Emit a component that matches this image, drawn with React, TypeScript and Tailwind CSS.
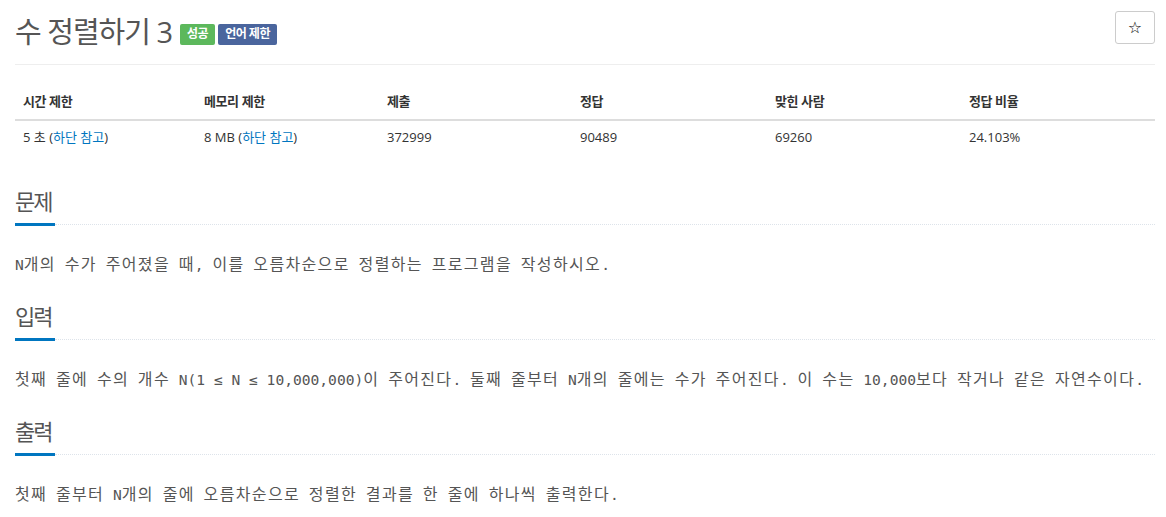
const HANGUL = /([\uAC00-\uD7A3]+)/;

// Korean runs are drawn full width, latin runs half width, like a CJK coding font
function MonoText({ text }: { text: string }) {
    const parts = text.split(HANGUL).filter((p) => p.length > 0);
    return (
        <p className="whitespace-nowrap leading-[24px] text-[#555]">
            {parts.map((p, i) =>
                HANGUL.test(p) ? (
                    <span key={i} className="font-['Noto_Sans_CJK_KR',sans-serif] text-[16px] tracking-[1.35px]">{p}</span>
                ) : (
                    <span key={i} className="font-['DejaVu_Sans_Mono',monospace] text-[14.6px] whitespace-pre">{p}</span>
                )
            )}
        </p>
    );
}

function Section({ title, text, first }: { title: string; text: string; first?: boolean }) {
    return (
        <section className={first ? "mt-[33px]" : "mt-[24px]"}>
            <div className="flex items-end">
                <h2 className="w-[40px] shrink-0 whitespace-nowrap border-b-[3px] border-[#0076c0] pb-[7px] text-[22px] leading-[30px] tracking-[-2px] text-[#555]">
                    {title}
                </h2>
                <div className="mb-[1px] flex-1 border-b border-dotted border-[#dde3ea]"></div>
            </div>
            <div className="mt-[25px]">
                <MonoText text={text} />
            </div>
        </section>
    );
}

const columns = ["시간 제한", "메모리 제한", "제출", "정답", "맞힌 사람", "정답 비율"];

function Link({ children }: { children: string }) {
    return <span className="text-[#0076c0]">{children}</span>;
}

export default function App() {
    return (
        <div className="min-h-screen bg-white pl-[15px] pr-[11px] font-['Open_Sans','Noto_Sans_CJK_KR',sans-serif] text-[#333]">
            <div className="flex h-[65px] items-start justify-between border-b border-[#eee]">
                <div className="flex h-full items-center">
                    <h1 className="text-[29px] leading-[36px] tracking-[-1px] text-[#555]">수 정렬하기 3</h1>
                    <span className="ml-[8px] mt-[4px] flex h-[21px] items-center rounded-[2px] bg-[#5cb85c] px-[7px] text-[12px] font-bold leading-none tracking-[-0.5px] text-white">
                        성공
                    </span>
                    <span className="ml-[3px] mt-[4px] flex h-[21px] items-center rounded-[2px] bg-[#4a659d] px-[7px] text-[12px] font-bold leading-none tracking-[-0.5px] text-white">
                        언어 제한
                    </span>
                </div>
                <button className="mt-[11px] flex h-[33px] w-[40px] items-center justify-center rounded-[3px] border border-[#ccc] bg-white font-['DejaVu_Sans',sans-serif] text-[16px] text-black">
                    ☆
                </button>
            </div>

            <div className="mt-[18px] grid grid-cols-[181px_183px_193px_195px_194px_194px] text-[13px]">
                {columns.map((c) => (
                    <div key={c} className="border-b-2 border-[#ddd] px-[8px] py-[8px] font-bold leading-[20px] tracking-[-0.4px]">
                        {c}
                    </div>
                ))}
                <div className="px-[8px] py-[6px] leading-[20px]">
                    5 초 (<Link>하단 참고</Link>)
                </div>
                <div className="px-[8px] py-[6px] leading-[20px]">
                    8 MB (<Link>하단 참고</Link>)
                </div>
                <div className="px-[8px] py-[6px] leading-[20px]">372999</div>
                <div className="px-[8px] py-[6px] leading-[20px]">90489</div>
                <div className="px-[8px] py-[6px] leading-[20px]">69260</div>
                <div className="px-[8px] py-[6px] leading-[20px]">24.103%</div>
            </div>

            <Section first title="문제" text="N개의 수가 주어졌을 때, 이를 오름차순으로 정렬하는 프로그램을 작성하시오." />
            <Section
                title="입력"
                text="첫째 줄에 수의 개수 N(1 ≤ N ≤ 10,000,000)이 주어진다. 둘째 줄부터 N개의 줄에는 수가 주어진다. 이 수는 10,000보다 작거나 같은 자연수이다."
            />
            <Section title="출력" text="첫째 줄부터 N개의 줄에 오름차순으로 정렬한 결과를 한 줄에 하나씩 출력한다." />
        </div>
    );
}
